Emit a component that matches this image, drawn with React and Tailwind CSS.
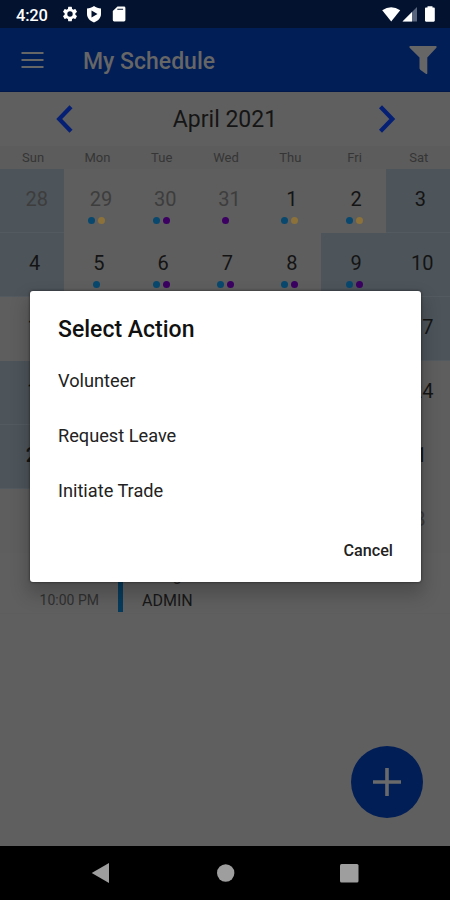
import React from "react";

const WEEKDAYS = ["Sun", "Mon", "Tue", "Wed", "Thu", "Fri", "Sat"];
const DOT = { b: "bg-[#08486e]", y: "bg-[#8c723a]", p: "bg-[#3b0062]" };

// n: day, d: shift dots, s: shaded, m: muted, b: bold, pad: left nudge; an empty entry is a blank cell
const WEEKS = [
  [{ n: 28, s: 1, m: 1 }, { n: 29, d: "by", m: 1 }, { n: 30, d: "bp", m: 1 }, { n: 31, d: "p", m: 1 }, { n: 1, d: "by" }, { n: 2, d: "by" }, { n: 3, s: 1 }],
  [{ n: 4, s: 1 }, { n: 5, d: "b" }, { n: 6, d: "bp" }, { n: 7, d: "bp" }, { n: 8, d: "bp" }, { n: 9, d: "bp", s: 1 }, { n: 10, s: 1 }],
  [{ n: 11, pad: "pl-[13px]" }, {}, {}, {}, {}, {}, { n: 17, s: 1 }],
  [{ n: 18, s: 1, pad: "pl-[12px]" }, {}, {}, {}, {}, {}, { n: 24 }],
  [{ n: 25, s: 1, b: 1, pad: "pl-[10px]" }, {}, {}, {}, {}, {}, { n: 1, pad: "pl-[7px]" }],
  [{}, {}, {}, {}, {}, {}, { n: 8, m: 1, pad: "pl-1" }],
];

function StatusBar() {
  return (
    <div className="flex h-7 items-center bg-[#03122e] pl-4 pr-3.5 text-white">
      <span className="w-[45px] pt-[3px] text-[16.500px] font-medium leading-7 tracking-[-0.2px]">4:20</span>
      <svg className="h-[18px] w-[18px]" viewBox="0 0 24 24" fill="currentColor">
        <path fillRule="evenodd" d="M19.14 12.94c.04-.3.06-.61.06-.94s-.02-.64-.07-.94l2.03-1.58a.49.49 0 0 0 .12-.61l-1.92-3.32a.49.49 0 0 0-.59-.22l-2.39.96a7 7 0 0 0-1.62-.94l-.36-2.54A.48.48 0 0 0 13.92 2.400h-3.84a.48.48 0 0 0-.48.41l-.36 2.54c-.59.24-1.13.57-1.62.94l-2.39-.96a.49.49 0 0 0-.59.22L2.740 8.870a.48.48 0 0 0 .12.61l2.03 1.58c-.05.3-.09.63-.09.94s.02.64.07.94l-2.03 1.58a.49.49 0 0 0-.12.61l1.92 3.320c.12.22.37.29.59.22l2.390-.96c.5.38 1.030.7 1.620.94l.36 2.540c.05.24.24.41.48.41h3.840c.24 0 .44-.17.47-.41l.36-2.540c.59-.24 1.130-.56 1.620-.94l2.390.96c.22.08.47 0 .59-.22l1.920-3.320a.48.48 0 0 0-.12-.61zM12 15.6a3.600 3.600 0 1 1 0-7.200 3.600 3.600 0 0 1 0 7.200z" />
      </svg>
      <svg className="ml-[7px] h-[18px] w-[16px]" viewBox="0 0 16 18" fill="currentColor">
        <path fillRule="evenodd" d="M8 1C6 2.600 3.500 3.400 1 3.500V9c0 4 3 7 7 8.500C12 16 15 13 15 9V3.500C12.500 3.400 10 2.600 8 1zM5.500 5.500 11.500 9l-6 3.500z" />
      </svg>
      <svg className="ml-[10px] h-[18px] w-[14px]" viewBox="0 0 14 18" fill="currentColor">
        <path fillRule="evenodd" d="M5.500 1.500H12a1.400 1.400 0 0 1 1.400 1.400v12.200a1.400 1.400 0 0 1-1.400 1.400H2.200a1.400 1.400 0 0 1-1.400-1.400V6zM5.300 3.800v1h5.800v-1z" />
      </svg>
      <svg className="ml-auto h-[18px] w-[54px]" viewBox="0 0 54 18" fill="currentColor">
        <path d="M.2 5.200Q9.200-.8 18.200 5.200L9.200 16.500z" />
        <path d="M35 2v14.500H20.500z" fill="#59657d" />
        <path d="M30 7v9.500h-9.500z" />
        <path d="M45.500 2.500V1.300h5v1.200h1.200c.7 0 1.100.5 1.100 1.100v12c0 .7-.5 1.200-1.100 1.200h-7.600c-.7 0-1.100-.5-1.100-1.200v-12c0-.6.4-1.100 1.100-1.100z" />
      </svg>
    </div>
  );
}

function Header() {
  return (
    <header className="flex h-16 items-center border-b border-[#03184a] bg-[#021e57] pl-[21px] pr-3 text-[#666]">
      <svg className="h-[18px] w-[23px] shrink-0" viewBox="0 0 23 18" stroke="currentColor" strokeWidth="1.9">
        <path d="M.5 2h22M.5 9h22M.5 16h22" />
      </svg>
      <h1 className="ml-[39px] pt-[5px] text-[23px] font-medium leading-7">My Schedule</h1>
      <svg className="ml-auto h-[30px] w-[30px]" viewBox="0 0 30 30" fill="currentColor">
        <path d="M2 1h26q1.300.5.4 1.700L19.300 12.500V28.500q-.6 1-1.600.3l-5.500-4-.7-1.200V12.500L1.600 2.700Q.8 1.500 2 1z" />
      </svg>
    </header>
  );
}

function Day({ day }) {
  const color = day.m ? "text-[#3d3d3d]" : "text-[#141414]";
  const dots = (day.d || "").split("").filter(Boolean);
  const pad = day.pad || (day.n > 9 ? "pl-[9px]" : "pl-[5px]");
  return (
    <div className={"flex flex-col items-center border-b " + (day.s ? "border-[#535a60] bg-[#4d545a]" : "border-[#5e5e5e] bg-[#5e5e5e]")}>
      {day.n && (
        <span className={"mt-[17px] text-[20px] leading-[26px] " + pad + (day.b ? " font-medium " : " ") + color}>{day.n}</span>
      )}
      <div className="mt-[5px] flex gap-[3px] pl-px">
        {dots.map((d) => <i key={d} className={"h-[7px] w-[7px] rounded-full " + DOT[d]} />)}
      </div>
    </div>
  );
}

function Calendar() {
  return (
    <section>
      <div className="flex h-[54px] items-center justify-between pl-14 pr-[54px]">
        <svg className="h-7 w-[17px]" viewBox="0 0 17 28" fill="none" stroke="#051f75" strokeWidth="4.200"><path d="M15 1.800 3.200 14 15 26.200" /></svg>
        <h2 className="-ml-0.5 pt-0.5 text-[23px] leading-7 text-[#151515]">April 2021</h2>
        <svg className="h-7 w-[17px]" viewBox="0 0 17 28" fill="none" stroke="#051f75" strokeWidth="4.200"><path d="M1.500 1.800 13.300 14 1.500 26.200" /></svg>
      </div>
      <div className="grid grid-cols-7 bg-[#5c5c5c] text-center text-[13px] leading-[23px] text-[#353535]">
        {WEEKDAYS.map((d) => <span key={d} className="pl-0.5">{d}</span>)}
      </div>
      <div className="grid auto-rows-[64px] grid-cols-7">
        {WEEKS.flat().map((day, i) => <Day key={i} day={day} />)}
      </div>
    </section>
  );
}

function Shift() {
  return (
    <div className="flex h-[61px] items-end border-b border-[#5d5d5d] pb-px text-[#242424]">
      <span className="w-[99px] pb-1 text-right text-[14px] leading-4 text-[#303030]">10:00 PM</span>
      <div className="ml-[19px] h-14 w-[5px] bg-[#063b5c]" />
      <div className="ml-[19px] flex flex-col pb-px text-[16px] leading-5">
        <span className="mb-[5px]">Assigned</span>
        <span className="text-[#171717]">ADMIN</span>
      </div>
    </div>
  );
}

function ActionDialog() {
  return (
    <div role="dialog" className="absolute left-[30px] top-[291px] flex h-[291px] w-[391px] flex-col rounded-[3px] bg-white px-7 text-[#222] shadow-[0_10px_18px_3px_rgba(0,0,0,0.2),0_0_3px_rgba(0,0,0,0.6)]">
      <h3 className="mt-[25px] text-[23px] font-medium leading-7 text-[#111]">Select Action</h3>
      <ul className="mt-[9px] text-[18.200px] leading-[55px]">
        <li>Volunteer</li>
        <li>Request Leave</li>
        <li>Initiate Trade</li>
      </ul>
      <button className="mt-[21px] self-end text-[16.200px] font-medium leading-6 text-[#222]">Cancel</button>
    </div>
  );
}

export default function App() {
  return (
    <div className="relative flex h-[900px] w-[450px] flex-col overflow-hidden bg-[#5f5f5f] font-['Roboto',sans-serif]">
      <StatusBar />
      <Header />
      <main className="flex-1">
        <Calendar />
        <Shift />
      </main>
      <nav className="flex h-[54px] items-center bg-black pl-[91px]">
        <svg className="h-5 w-[268px]" viewBox="0 0 268 20" fill="#9e9e9e">
          <path d="M.7 10 18 0v20z" />
          <circle cx="134.700" cy="10" r="8.700" />
          <rect x="249" y="1" width="18.500" height="18.500" rx="1.500" />
        </svg>
      </nav>
      <button className="absolute left-[351px] top-[746px] flex h-[72px] w-[72px] items-center justify-center rounded-full bg-[#021e57]" aria-label="Add">
        <svg className="h-7 w-7" viewBox="0 0 28 28" stroke="#6a6a6a" strokeWidth="3.600"><path d="M14 0v28M0 14h28" /></svg>
      </button>
      <ActionDialog />
    </div>
  );
}
